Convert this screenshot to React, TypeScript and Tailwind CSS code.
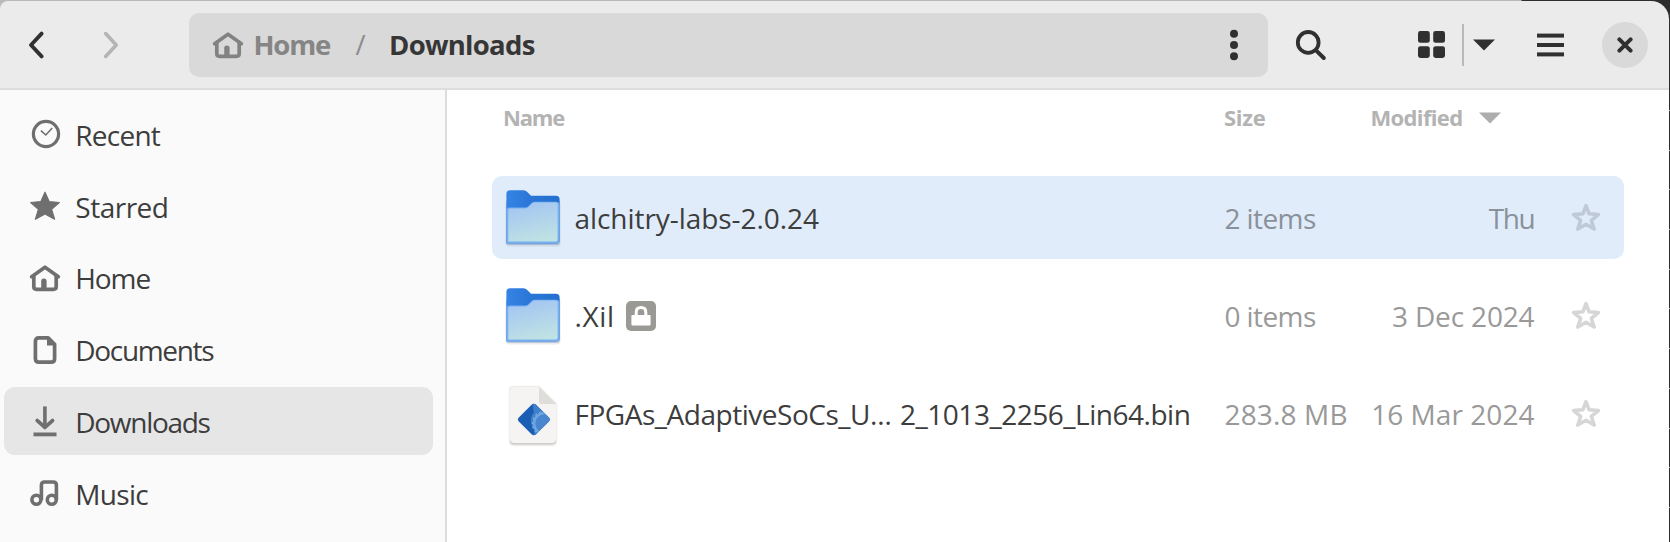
import type { ReactNode } from "react";

const STAR =
  "M15 1.2 L19.1 10.6 L29.3 11.5 L21.6 18.3 L24.6 28.2 L15 23 L5.4 28.2 L8.4 18.3 L0.7 11.5 L10.9 10.6 Z";

function Glyph({ children, className = "" }: { children: ReactNode; className?: string }) {
  return (
    <svg viewBox="0 0 30 30" className={`h-[30px] w-[30px] shrink-0 overflow-visible ${className}`} fill="none" stroke="currentColor">
      {children}
    </svg>
  );
}

function HomeShape() {
  return (
    <>
      <path d="M1.6 13.7 L15 4.2 L28.4 13.7" strokeWidth="3.6" strokeLinecap="round" strokeLinejoin="round" />
      <path d="M3.8 13 V23.6 Q3.8 26.4 6.6 26.4 H23.4 Q26.2 26.4 26.2 23.6 V13" strokeWidth="3.7" />
      <path d="M11.2 27 V18 Q11.2 15.4 13.9 15.4 Q16.6 15.4 16.6 18 V27 Z" fill="currentColor" stroke="none" />
    </>
  );
}

const places: { label: string; tracking: string; icon: ReactNode; active?: boolean }[] = [
  {
    label: "Recent",
    tracking: "tracking-[-0.75px]",
    icon: (
      <>
        <circle cx="16" cy="15" r="12.6" strokeWidth="3.2" />
        <path d="M10.9 11.6 L15.8 16 L22.2 9" strokeWidth="1.6" />
      </>
    ),
  },
  {
    label: "Starred",
    tracking: "tracking-[-0.5px]",
    icon: <path d={STAR} fill="currentColor" strokeWidth="1.2" strokeLinejoin="round" />,
  },
  { label: "Home", tracking: "tracking-[-1.1px]", icon: <HomeShape /> },
  {
    label: "Documents",
    tracking: "tracking-[-1.32px]",
    icon: (
      <>
        <path d="M8.8 3.9 H18.2 L24.6 10.3 V24.8 Q24.6 28.2 21.2 28.2 H8.8 Q5.4 28.2 5.4 24.8 V7.3 Q5.4 3.9 8.8 3.9 Z" strokeWidth="3.7" strokeLinejoin="round" />
        <path d="M17 3 V11.4 H25.4 Z" fill="currentColor" stroke="none" />
      </>
    ),
  },
  {
    label: "Downloads",
    tracking: "tracking-[-1.3px]",
    active: true,
    icon: (
      <>
        <path d="M14.9 0.4 V20.5" strokeWidth="3.6" />
        <path d="M7.3 14.6 L14.9 21.4 L22.5 14.6" strokeWidth="3.8" strokeLinecap="round" strokeLinejoin="round" />
        <path d="M3.5 28.4 H26.5" strokeWidth="3.8" />
      </>
    ),
  },
  {
    label: "Music",
    tracking: "tracking-[-0.7px]",
    icon: (
      <>
        <circle cx="6.4" cy="21.8" r="4.5" strokeWidth="3.6" />
        <circle cx="21.8" cy="21.8" r="4.5" strokeWidth="3.6" />
        <path d="M11.4 22 V7.2 Q11.4 4 14.6 4 H23 Q26.4 4 26.4 7.2 V22" strokeWidth="3.6" />
      </>
    ),
  },
];

function FolderIcon() {
  return (
    <svg viewBox="0 0 54 58" className="h-[58px] w-[54px] overflow-visible">
      <defs>
        <linearGradient id="folderFront" x1="0.3" y1="0" x2="0.6" y2="1">
          <stop offset="0" stopColor="#a3c5f2" />
          <stop offset="1" stopColor="#bfe2e4" />
        </linearGradient>
        <linearGradient id="folderBack" x1="0" y1="0" x2="1" y2="0">
          <stop offset="0" stopColor="#3584e4" />
          <stop offset="0.45" stopColor="#2a76d8" />
          <stop offset="1" stopColor="#2370cf" />
        </linearGradient>
      </defs>
      <rect x="-0.6" y="10" width="55.2" height="46.4" rx="4" fill="#5a6f8c" opacity="0.14" />
      <rect x="0" y="10" width="54" height="45" rx="3" fill="#5a6f8c" opacity="0.28" />
      <path d="M0.4 4 Q0.4 0.3 4 0.3 H17.5 Q19.6 0.3 21 1.8 L25 5.8 H50 Q53.6 5.8 53.6 9.5 V50 Q53.6 53.6 50 53.6 H1.5 Q0.4 53.6 0.4 52.5 Z" fill="url(#folderBack)" />
      <path d="M0.4 21 Q0.4 17.6 3.6 17.6 H19 Q21 17.6 22.3 16.3 L25.6 13 Q26.8 11.8 29 11.8 H50 Q53.6 11.8 53.6 15 V50 Q53.6 53.6 50 53.6 H1.5 Q0.4 53.6 0.4 52.5 Z" fill="#78aff0" />
      <path d="M2.3 20.5 Q2.3 18.4 4.4 18.4 H19.4 Q21.4 18.4 22.8 17 L26.2 13.6 Q27.4 12.4 29.4 12.4 H49.4 Q51.6 12.4 51.6 14.6 V49.4 Q51.6 51.6 49.4 51.6 H2.3 Z" fill="url(#folderFront)" />
    </svg>
  );
}

function PackageIcon() {
  return (
    <svg viewBox="0 0 54 60" className="h-[60px] w-[54px] overflow-visible">
      <path d="M7 -0.2 H33.4 L51.4 17.6 V55 Q51.4 60.4 46 60.4 H8 Q2.6 60.4 2.6 55 V4.4 Q2.6 -0.2 7 -0.2 Z" fill="#000" opacity="0.06" />
      <path d="M7.6 0.8 H33 L50 18 V54.4 Q50 58.8 45.6 58.8 H8.4 Q4 58.8 4 54.4 V5 Q4 0.8 7.6 0.8 Z" fill="#cfcecb" />
      <path d="M7.6 0.8 H33 L50 18 V52.6 Q50 57 45.6 57 H8.4 Q4 57 4 52.6 V5 Q4 0.8 7.6 0.8 Z" fill="#f5f4f2" />
      <path d="M33 0.8 L50 18 H35.5 Q33 18 33 15.5 Z" fill="#deddda" />
      <clipPath id="gem">
        <path d="M25.6 18.8 Q27.8 16.8 30 18.8 L42.8 31.6 Q44.6 33.6 42.8 35.6 L30 48.2 Q27.8 50.2 25.6 48.2 L12.8 35.6 Q11 33.6 12.8 31.6 Z" />
      </clipPath>
      <g clipPath="url(#gem)">
        <rect x="10" y="16" width="36" height="36" fill="#1a5fb4" />
        <path d="M28 16 L46 16 V52 H26 Q31 46 26 40 Q23 32 28 26 Q26 20 28 16 Z" fill="#3f7fcc" />
        <circle cx="38.5" cy="37.5" r="10.4" fill="#4a86cf" stroke="#6fa6df" strokeWidth="2.4" />
        <circle cx="38.5" cy="37.5" r="12" fill="none" stroke="#6fa6df" strokeWidth="1.6" strokeDasharray="2.4 2.2" />
      </g>
    </svg>
  );
}

function LockBadge() {
  return (
    <svg viewBox="0 0 30 30" className="ml-[11px] h-[30px] w-[30px]">
      <rect width="30" height="30" rx="5" fill="#9a9996" />
      <path d="M10.2 15 V11.4 Q10.2 6.6 15 6.6 Q19.8 6.6 19.8 11.4 V15" fill="none" stroke="#fff" strokeWidth="3" />
      <rect x="5.4" y="14" width="19.2" height="10.4" rx="1" fill="#fff" />
    </svg>
  );
}

interface Entry {
  name: ReactNode;
  nameTracking: string;
  size: string;
  sizeTracking: string;
  date: string;
  dateTracking: string;
  icon: ReactNode;
  selected?: boolean;
  locked?: boolean;
}

const entries: Entry[] = [
  { name: "alchitry-labs-2.0.24", nameTracking: "tracking-[-0.06px]", size: "2 items", sizeTracking: "tracking-[-0.6px]", date: "Thu", dateTracking: "tracking-[-1.3px]", icon: <FolderIcon />, selected: true },
  { name: ".Xil", nameTracking: "tracking-[0.6px]", size: "0 items", sizeTracking: "tracking-[-0.6px]", date: "3 Dec 2024", dateTracking: "tracking-[-0.15px]", icon: <FolderIcon />, locked: true },
  {
    name: (
      <>
        FPGAs_AdaptiveSoCs_U<span className="tracking-[1.4px]">…</span> 2_1013_2256_Lin64.bin
      </>
    ),
    nameTracking: "tracking-[-0.48px]",
    size: "283.8 MB",
    sizeTracking: "tracking-[0.15px]",
    date: "16 Mar 2024",
    dateTracking: "tracking-[0.05px]",
    icon: <PackageIcon />,
  },
];

function HeaderBar() {
  return (
    <header className="flex h-[89px] shrink-0 items-start border-b-2 border-[#dddddd] bg-[#ebebeb] pt-[11.5px]">
      <div className="flex h-16 w-full items-center">
        <svg viewBox="0 0 16 28" className="ml-[27.5px] h-7 w-4" fill="none" stroke="#303030" strokeWidth="3.8" strokeLinecap="round" strokeLinejoin="round">
          <path d="M13.6 2.6 L3 14 L13.6 25.4" />
        </svg>
        <svg viewBox="0 0 16 28" className="ml-[59px] h-7 w-4" fill="none" stroke="#b4b4b4" strokeWidth="3.6" strokeLinecap="round" strokeLinejoin="round">
          <path d="M2.6 2.6 L13.2 14 L2.6 25.4" />
        </svg>
        <nav className="ml-[70px] flex h-16 w-[1079px] items-center rounded-[10px] bg-[#d9d9d9] pl-[24.5px] text-[27.5px] font-bold">
          <Glyph className="text-[#828282]">
            <HomeShape />
          </Glyph>
          <span className="ml-[10.5px] w-[80px] pt-px tracking-[-1.2px] whitespace-nowrap text-[#858585]">Home</span>
          <span className="ml-[22px] w-[12px] font-normal text-[#8c8c8c]">/</span>
          <span className="ml-[21.5px] pt-px tracking-[-0.72px] whitespace-nowrap text-[#363636]">Downloads</span>
          <svg viewBox="0 0 8 32" className="mr-[30px] ml-auto h-8 w-2" fill="#303030">
            <circle cx="4" cy="4.7" r="4" />
            <circle cx="4" cy="16" r="4" />
            <circle cx="4" cy="27.3" r="4" />
          </svg>
        </nav>
        <svg viewBox="0 0 32 32" className="ml-[27.5px] h-8 w-8" fill="none" stroke="#303030">
          <circle cx="13.2" cy="13.4" r="10.4" strokeWidth="3.8" />
          <path d="M21 21.4 L28.8 29" strokeWidth="4" strokeLinecap="round" />
        </svg>
        <svg viewBox="0 0 27 27" className="ml-[91px] h-[27px] w-[27px]" fill="#303030">
          <rect width="11.8" height="11.8" rx="2.4" />
          <rect x="15.2" width="11.8" height="11.8" rx="2.4" />
          <rect y="15.2" width="11.8" height="11.8" rx="2.4" />
          <rect x="15.2" y="15.2" width="11.8" height="11.8" rx="2.4" />
        </svg>
        <div className="ml-[17px] h-[42px] w-[1.5px] bg-[#b9b9b9]" />
        <svg viewBox="0 0 22 12" className="ml-[9.5px] h-3 w-[22px]" fill="#303030">
          <path d="M0 0.4 H22 L11 11.6 Z" />
        </svg>
        <svg viewBox="0 0 27 24" className="ml-[41.5px] h-6 w-[27px]" fill="#303030">
          <rect y="0.6" width="27" height="4" />
          <rect y="10" width="27" height="4" />
          <rect y="19.4" width="27" height="4" />
        </svg>
        <div className="ml-[38.5px] flex h-[46px] w-[46px] items-center justify-center rounded-full bg-[#d9d9d9]">
          <svg viewBox="0 0 16 16" className="h-4 w-4" stroke="#303030" strokeWidth="4" strokeLinecap="round">
            <path d="M2.4 2.4 L13.6 13.6 M13.6 2.4 L2.4 13.6" />
          </svg>
        </div>
      </div>
    </header>
  );
}

function Sidebar() {
  return (
    <aside className="flex w-[446.5px] shrink-0 flex-col gap-1 border-r-2 border-[#dddddd] bg-[#fafafa] pt-[10.5px] pl-1">
      {places.map((place) => (
        <div
          key={place.label}
          className={`flex h-[67.7px] w-[429px] shrink-0 items-center rounded-[11px] pl-[26.3px] ${place.active ? "bg-[#e6e6e6]" : ""}`}
        >
          <Glyph className="text-[#6f6f6f]">{place.icon}</Glyph>
          <span className={`ml-[15px] pt-[1.5px] text-[28px] whitespace-nowrap text-[#3d3d3d] ${place.tracking}`}>{place.label}</span>
        </div>
      ))}
    </aside>
  );
}

function FileList() {
  return (
    <main className="min-w-0 flex-1 bg-white pl-[45.5px]">
      <div className="flex h-[86px] items-start pt-[11px] text-[22px] font-bold text-[#b3b3b3]">
        <span className="w-[721px] pl-[11px] tracking-[-1.2px]">Name</span>
        <span className="w-[147px] pl-[11px] tracking-[-0.3px]">Size</span>
        <span className="w-[119px] pl-[10.5px] tracking-[-0.65px]">Modified</span>
        <svg viewBox="0 0 22 12" className="mt-[10.5px] h-3 w-[22px]" fill="#adadad">
          <path d="M0 0.4 H22 L11 11.6 Z" />
        </svg>
      </div>
      <div className="flex flex-col gap-[14.9px]">
        {entries.map((entry) => (
          <div
            key={entry.date}
            className={`flex h-[83.3px] w-[1132px] items-center rounded-[10px] pl-[14px] text-[28px] whitespace-nowrap ${entry.selected ? "bg-[#e0ecfa]" : ""}`}
          >
            <div className="w-[54px] pt-[3px]">{entry.icon}</div>
            <div className="ml-[14.5px] flex w-[650px] items-center text-[#3d3d3d]">
              <span className={entry.nameTracking}>{entry.name}</span>
              {entry.locked && <LockBadge />}
            </div>
            <span className={`w-[140px] ${entry.sizeTracking} ${entry.selected ? "text-[#8a919a]" : "text-[#999999]"}`}>{entry.size}</span>
            <span className={`w-[170px] text-right ${entry.dateTracking} ${entry.selected ? "text-[#8a919a]" : "text-[#999999]"}`}>{entry.date}</span>
            <Glyph className={`ml-[36.5px] ${entry.selected ? "text-[#c0cad7]" : "text-[#d6d6d6]"}`}>
              <path d="M15 2.6 L18.1 10.8 L27.4 11.6 L20.3 17.3 L23.2 26 L15 21.2 L6.8 26 L9.7 17.3 L2.6 11.6 L11.9 10.8 Z" strokeWidth="3.6" strokeLinejoin="round" />
            </Glyph>
          </div>
        ))}
      </div>
    </main>
  );
}

export default function App() {
  return (
    <div className="flex h-[542px] w-[1670px] overflow-hidden bg-[linear-gradient(90deg,#b9b9b9_0px,#b9b9b9_1521px,#2d2d2d_1522px)] pt-px font-['Open_Sans',sans-serif]">
      <div className="flex h-[541px] w-[1669px] shrink-0 flex-col overflow-hidden rounded-tl-[8px] rounded-tr-[18px]">
        <HeaderBar />
        <div className="flex min-h-0 flex-1">
          <Sidebar />
          <FileList />
        </div>
      </div>
      <div className="mt-[109px] w-px bg-[repeating-linear-gradient(180deg,#c8c8c8_0px,#c8c8c8_1px,#2d2d2d_1px,#2d2d2d_39.7px)]" />
    </div>
  );
}
